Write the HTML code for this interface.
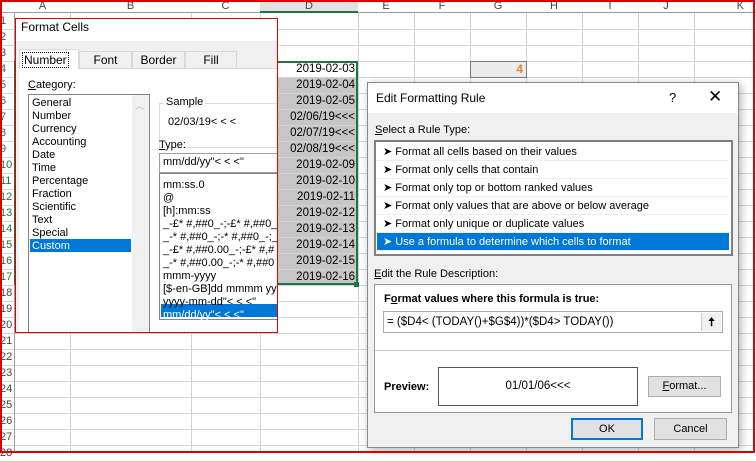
<!DOCTYPE html><html><head><style>
*{margin:0;padding:0;box-sizing:border-box}
body{width:756px;height:453px;overflow:hidden;background:#fff;font-family:"Liberation Sans",sans-serif;font-size:11px;color:#000;position:relative}
.a{position:absolute}
.hl{position:absolute;height:1px;background:#d4d4d4}
.vl{position:absolute;width:1px;background:#d4d4d4}
.ch{position:absolute;top:0;height:13px;text-align:center;font-size:11px;color:#444;line-height:13px}
.rh{position:absolute;left:0;width:15px;font-size:11px;color:#444;line-height:16px}
.dc{position:absolute;left:261px;width:96px;height:15px;text-align:right;padding-right:2px;font-size:11.5px;line-height:16px}
.it{position:absolute;white-space:nowrap;font-size:11px}
.ri{position:absolute;left:377px;width:352px;height:18px;line-height:18px;padding-left:6px;font-size:11px;border-bottom:1px solid #eee}
</style></head><body>
<div class="a" style="left:0;top:0;width:756px;height:13px;background:#fff;border-bottom:1px solid #9e9e9e"></div>
<div class="a" style="left:260px;top:0;width:98px;height:13px;background:#e2e2e2;border-bottom:2px solid #217346"></div>
<div class="ch" style="left:15px;width:55px">A</div>
<div class="ch" style="left:70px;width:121px">B</div>
<div class="ch" style="left:191px;width:69px">C</div>
<div class="ch" style="left:260px;width:98px">D</div>
<div class="ch" style="left:358px;width:56px">E</div>
<div class="ch" style="left:414px;width:56px">F</div>
<div class="ch" style="left:470px;width:56px">G</div>
<div class="ch" style="left:526px;width:56px">H</div>
<div class="ch" style="left:582px;width:56px">I</div>
<div class="ch" style="left:638px;width:56px">J</div>
<div class="ch" style="left:694px;width:50px;text-align:right">K</div>
<div class="a" style="left:262px;top:77px;width:94px;height:206px;background:#c6c6c6"></div>
<div id="g"></div>
<div class="a" style="left:14px;top:13px;width:1px;height:440px;background:#9e9e9e"></div>
<div class="a" style="left:14px;top:61px;width:2px;height:224px;background:#217346"></div>
<div class="a" style="left:260px;top:61px;width:98px;height:224px;border:2px solid #217346"></div>
<div class="a" style="left:354px;top:282px;width:5px;height:5px;background:#217346"></div>
<div class="a" style="left:470px;top:61px;width:57px;height:17px;background:#ececec;border:1px solid #7a7a7a;text-align:right;padding-right:3px;color:#ed7d31;font-weight:bold;font-size:12px;line-height:15px">4</div>
<div class="a" style="left:15px;top:18px;width:263px;height:315px;background:#fff;border:1px solid #e00000;overflow:hidden">
 <div class="a" style="left:0;top:22px;width:263px;height:293px;background:#f0f0f0"></div>
 <div class="it" style="left:5px;top:1px;font-size:12px">Format Cells</div>
 <div class="a" style="left:3px;top:49px;width:260px;height:270px;background:#fff;border-top:1px solid #d9d9d9"></div>
 <div class="a" style="left:3px;top:30px;width:60px;height:20px;background:#fff;border:1px solid #d9d9d9;border-bottom:none"></div>
 <div class="it" style="left:6px;top:33px;font-size:12px;border:1px dotted #000;padding:0 1px">Number</div>
 <div class="a" style="left:63px;top:32px;width:53px;height:17px;border:1px solid #d9d9d9;border-bottom:none;text-align:center;font-size:12px;line-height:17px">Font</div>
 <div class="a" style="left:116px;top:32px;width:53px;height:17px;border:1px solid #d9d9d9;border-bottom:none;text-align:center;font-size:12px;line-height:17px">Border</div>
 <div class="a" style="left:169px;top:32px;width:52px;height:17px;border:1px solid #d9d9d9;border-bottom:none;text-align:center;font-size:12px;line-height:17px">Fill</div>
 <div class="it" style="left:12px;top:60px"><u>C</u>ategory:</div>
 <div class="a" style="left:12px;top:75px;width:122px;height:240px;border:1px solid #828282;background:#fff"></div>
 <div class="a" style="left:116px;top:76px;width:17px;height:239px;background:#f0f0f0"></div>
 <div class="it" style="left:119px;top:80px;color:#bbb;font-size:9px">︿</div>
 <div class="a" style="left:14px;top:220px;width:101px;height:13px;background:#0078d7"></div>
 <div class="it" style="left:16px;top:78px;line-height:13px">General<br>Number<br>Currency<br>Accounting<br>Date<br>Time<br>Percentage<br>Fraction<br>Scientific<br>Text<br>Special<br><span style="color:#fff">Custom</span></div>
 <div class="a" style="left:143px;top:84px;width:120px;height:45px;border:1px solid #dcdcdc"></div>
 <div class="it" style="left:148px;top:77px;background:#fff;padding:0 2px">Sample</div>
 <div class="it" style="left:152px;top:97px">02/03/19&lt; &lt; &lt;</div>
 <div class="it" style="left:143px;top:120px"><u>T</u>ype:</div>
 <div class="a" style="left:143px;top:134px;width:120px;height:20px;border:1px solid #a0a0a0;background:#fff"></div>
 <div class="it" style="left:147px;top:137px">mm/dd/yy"&lt; &lt; &lt;"</div>
 <div class="a" style="left:143px;top:154px;width:120px;height:147px;border:1px solid #828282;background:#fff"></div>
 <div class="a" style="left:145px;top:285px;width:118px;height:13px;background:#0078d7"></div>
 <div class="it" style="left:147px;top:160px;line-height:13px">mm:ss.0<br>@<br>[h]:mm:ss<br>_-£* #,##0_-;-£* #,##0_<br>_-* #,##0_-;-* #,##0_-;_<br>_-£* #,##0.00_-;-£* #,#<br>_-* #,##0.00_-;-* #,##0<br>mmm-yyyy<br>[$-en-GB]dd mmmm yy<br>yyyy-mm-dd"&lt; &lt; &lt;"<br><span style="color:#fff">mm/dd/yy"&lt; &lt; &lt;"</span></div>
</div>
<div class="a" style="left:367px;top:82px;width:372px;height:366px;background:#f0f0f0;border:1px solid #888;box-shadow:2px 2px 8px rgba(0,0,0,.3)">
 <div class="a" style="left:0;top:0;width:370px;height:30px;background:#fff"></div>
 <div class="it" style="left:8px;top:8px;font-size:12px">Edit Formatting Rule</div>
 <div class="it" style="left:301px;top:7px;font-size:13px">?</div>
 <div class="it" style="left:340px;top:4px;font-size:17px">✕</div>
 <div class="it" style="left:7px;top:41px"><u>S</u>elect a Rule Type:</div>
 <div class="a" style="left:6px;top:57px;width:359px;height:116px;border:2px solid #808080;background:#fff"></div>
 <div class="it" style="left:6px;top:185px"><u>E</u>dit the Rule Description:</div>
 <div class="a" style="left:6px;top:201px;width:358px;height:129px;border:1px solid #999;background:#fff"></div>
 <div class="it" style="left:16px;top:210px;font-weight:bold">F<u>o</u>rmat values where this formula is true:</div>
 <div class="a" style="left:15px;top:228px;width:340px;height:22px;border:1px solid #aaa;background:#fff"></div>
 <div class="it" style="left:19px;top:233px;font-size:11.5px">= ($D4&lt; (TODAY()+$G$4))*($D4&gt; TODAY())</div>
 <div class="a" style="left:333px;top:230px;width:20px;height:18px;background:#f0f0f0;border-left:1px solid #ccc;text-align:center;font-weight:bold;font-size:12px;line-height:18px">🠅</div>
 <div class="a" style="left:7px;top:267px;width:356px;height:1px;background:#ccc"></div>
 <div class="it" style="left:16px;top:298px;font-weight:bold">Preview:</div>
 <div class="a" style="left:70px;top:284px;width:200px;height:39px;border:1px solid #555;background:#fff;text-align:center;line-height:37px;font-size:11.5px">01/01/06&lt;&lt;&lt;</div>
 <div class="a" style="left:280px;top:293px;width:73px;height:21px;border:1px solid #adadad;background:#e1e1e1;text-align:center;line-height:19px"><u>F</u>ormat...</div>
 <div class="a" style="left:203px;top:335px;width:72px;height:22px;border:2px solid #0078d7;background:#e1e1e1;text-align:center;line-height:18px">OK</div>
 <div class="a" style="left:286px;top:335px;width:73px;height:22px;border:1px solid #adadad;background:#e1e1e1;text-align:center;line-height:20px">Cancel</div>
</div>
<div class="ri" style="top:143px">➤ Format all cells based on their values</div>
<div class="ri" style="top:161px">➤ Format only cells that contain</div>
<div class="ri" style="top:179px">➤ Format only top or bottom ranked values</div>
<div class="ri" style="top:197px">➤ Format only values that are above or below average</div>
<div class="ri" style="top:215px">➤ Format only unique or duplicate values</div>
<div class="ri" style="top:233px;background:#0078d7;color:#fff">➤ Use a formula to determine which cells to format</div>
<div class="a" style="left:0;top:0;width:755px;height:453px;border:2px solid #e00000;pointer-events:none"></div>
<script>
var g=document.getElementById('g'),h='';
var cols=[70,191,260,358,414,470,526,582,638,694];
for(var i=0;i<cols.length;i++)h+='<div class="vl" style="left:'+cols[i]+'px;top:13px;height:440px"></div>';
for(var r=1;r<=28;r++){var y=13+16*r;h+='<div class="hl" style="left:0;top:'+y+'px;width:756px"></div>';
var c=(r>=4&&r<=17)?'#217346':'#444';
h+='<div class="rh" style="top:'+(13+16*(r-1))+'px;color:'+c+'">'+r+'</div>';}
var d=['2019-02-03','2019-02-04','2019-02-05','02/06/19<<<','02/07/19<<<','02/08/19<<<','2019-02-09','2019-02-10','2019-02-11','2019-02-12','2019-02-13','2019-02-14','2019-02-15','2019-02-16'];
for(var k=0;k<d.length;k++)h+='<div class="dc" style="top:'+(61+16*k)+'px">'+d[k].replace(/</g,'&lt;')+'</div>';
g.innerHTML=h;
</script>
</body></html>
